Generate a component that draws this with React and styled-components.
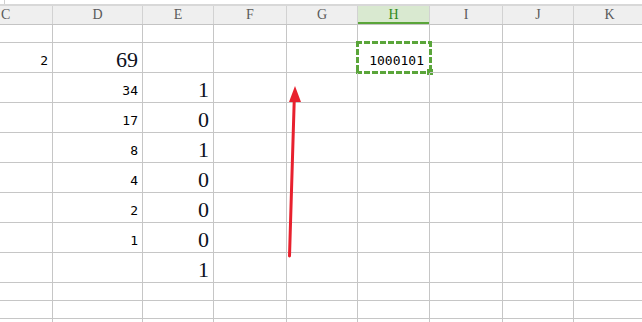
import React from 'react';
import styled, { createGlobalStyle } from 'styled-components';

const GlobalStyle = createGlobalStyle`
    body {
        margin: 0;
        background: #ffffff;
        overflow: hidden;
    }
`;

const GREEN = '#5aa53a';

const COLS = [
    { name: 'C', width: 53 },
    { name: 'D', width: 90 },
    { name: 'E', width: 71 },
    { name: 'F', width: 73 },
    { name: 'G', width: 71 },
    { name: 'H', width: 72, active: true },
    { name: 'I', width: 73 },
    { name: 'J', width: 71 },
    { name: 'K', width: 72 },
];

// each row: height and cell contents keyed by column
const ROWS = [
    { h: 18, cells: {} },
    { h: 30, cells: { C: { v: '2' }, D: { v: '69', big: true }, H: { v: '1000101', selected: true } } },
    { h: 30, cells: { D: { v: '34' }, E: { v: '1', big: true } } },
    { h: 30, cells: { D: { v: '17' }, E: { v: '0', big: true } } },
    { h: 30, cells: { D: { v: '8' }, E: { v: '1', big: true } } },
    { h: 30, cells: { D: { v: '4' }, E: { v: '0', big: true } } },
    { h: 30, cells: { D: { v: '2' }, E: { v: '0', big: true } } },
    { h: 30, cells: { D: { v: '1' }, E: { v: '0', big: true } } },
    { h: 30, cells: { E: { v: '1', big: true } } },
    { h: 18, cells: {} },
    { h: 18, cells: {} },
    { h: 18, cells: {} },
];

const template = COLS.map(c => `${c.width}px`).join(' ');

const Page = styled.div`
    position: relative;
    width: 642px;
    height: 322px;
    overflow: hidden;
`;

const TopStrip = styled.div`
    height: 4px;
    background: #ffffff;
    border-left: 1px solid #d0d0d0;
    margin-left: 4px;
`;

const HeaderRow = styled.div`
    display: grid;
    grid-template-columns: ${template};
    height: 21px;
    box-sizing: border-box;
    border-top: 2px solid #d8d8d8;
    border-bottom: 1px solid #c4c4c4;
    background: #efefef;
`;

const HeaderCell = styled.div`
    display: flex;
    align-items: center;
    justify-content: center;
    box-sizing: border-box;
    border-right: 1px solid #d2d2d2;
    font-family: "Liberation Serif", serif;
    font-size: 14px;
    color: ${p => (p.$active ? '#2f8a1c' : '#5a5a5a')};
    background: ${p => (p.$active ? '#d9e9d0' : 'transparent')};
    box-shadow: ${p => (p.$active ? `inset 0 -2px 0 ${GREEN}` : 'none')};
    &:first-child {
        justify-content: flex-start;
        padding-left: 1px;
    }
`;

const Row = styled.div`
    display: grid;
    grid-template-columns: ${template};
    height: ${p => p.$h}px;
`;

const Cell = styled.div`
    position: relative;
    display: flex;
    align-items: flex-end;
    justify-content: flex-end;
    box-sizing: border-box;
    border-right: 1px solid #c6c6c6;
    border-bottom: 1px solid #c6c6c6;
    padding: 0 ${p => (p.$selected ? 5 : 4)}px 5px 0;
`;

const SmallNum = styled.span`
    font-family: "DejaVu Sans Mono", monospace;
    font-size: 13px;
    line-height: 13px;
    color: #000000;
`;

const BigNum = styled.span`
    font-family: "Liberation Serif", serif;
    font-size: 22px;
    line-height: 22px;
    margin-bottom: -4px;
    color: #0c1020;
`;

const dash = (dir) =>
    `repeating-linear-gradient(${dir}, ${GREEN} 0 6px, #ffffff 6px 8px)`;

const Selection = styled.div`
    position: absolute;
    left: -2px;
    top: -2px;
    right: -3px;
    bottom: -2px;
    pointer-events: none;
    background:
        ${dash('90deg')} left top / 100% 3px no-repeat,
        ${dash('90deg')} left bottom / 100% 3px no-repeat,
        ${dash('180deg')} left top / 3px 100% no-repeat,
        ${dash('180deg')} right top / 3px 100% no-repeat;
`;

const Handle = styled.div`
    position: absolute;
    right: -1px;
    bottom: -1px;
    width: 6px;
    height: 6px;
    background: ${GREEN};
`;

const Arrow = () => (
    <svg
        width="642"
        height="322"
        style={{ position: 'absolute', left: 0, top: 0, pointerEvents: 'none' }}
    >
        <line x1="289.5" y1="256" x2="294.3" y2="98" stroke="#e8212e" strokeWidth="3" strokeLinecap="round" />
        <polygon points="295,86 289,102 301,102" fill="#e8212e" />
    </svg>
);

export default function App() {
    return (
        <Page>
            <GlobalStyle />
            <TopStrip />
            <HeaderRow>
                {COLS.map(c => (
                    <HeaderCell key={c.name} $active={c.active}>{c.name}</HeaderCell>
                ))}
            </HeaderRow>
            {ROWS.map((r, i) => (
                <Row key={i} $h={r.h}>
                    {COLS.map(c => {
                        const cell = r.cells[c.name];
                        return (
                            <Cell key={c.name} $selected={cell && cell.selected}>
                                {cell && (cell.big
                                    ? <BigNum>{cell.v}</BigNum>
                                    : <SmallNum>{cell.v}</SmallNum>)}
                                {cell && cell.selected && (
                                    <Selection>
                                        <Handle />
                                    </Selection>
                                )}
                            </Cell>
                        );
                    })}
                </Row>
            ))}
            <Arrow />
        </Page>
    );
}
